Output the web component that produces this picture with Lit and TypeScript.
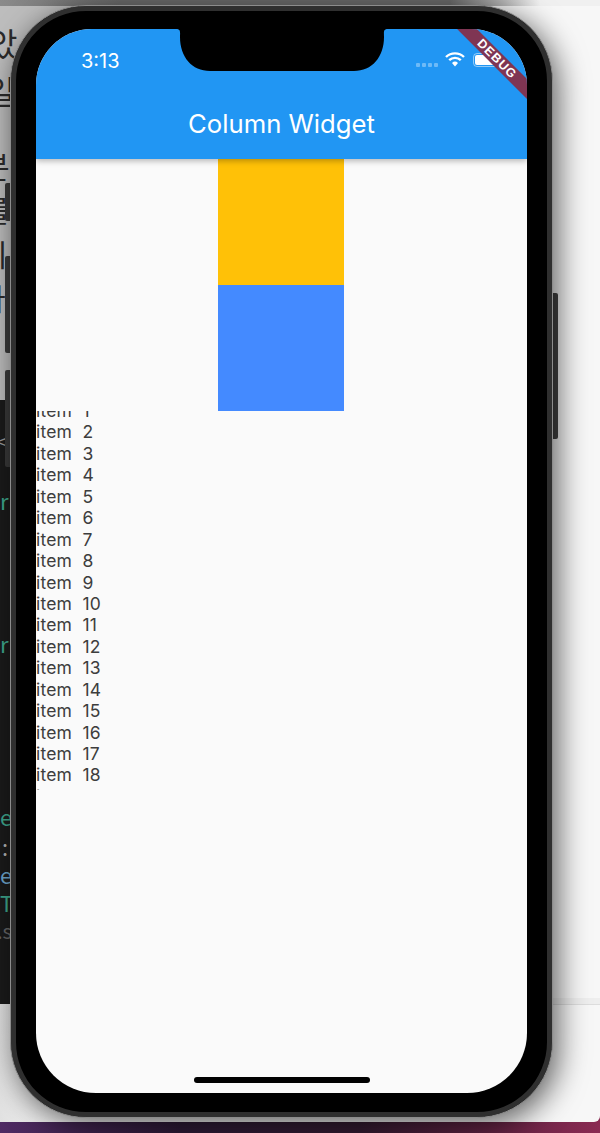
import { LitElement, html, css, svg } from "lit";
import { customElement } from "lit/decorators.js";

const ITEMS = Array.from({ length: 19 }, (_, i) => i + 1);

const STRIP = [
  { t: "았", y: 26, s: 32, c: "#2b2b2b", x: -12 },
  { t: "일", y: 74, s: 32, c: "#2b2b2b", x: -14 },
  { t: "분", y: 150, s: 30, c: "#2b2b2b", x: -18 },
  { t: "를", y: 194, s: 30, c: "#2b2b2b", x: -18 },
  { t: "지", y: 238, s: 30, c: "#2b2b2b", x: -20 },
  { t: "다", y: 282, s: 30, c: "#2b2b2b", x: -22 },
  { t: "<", y: 432, s: 18, c: "#9a9a9a", x: -4 },
  { t: "r", y: 489, s: 22, c: "#3fa98f", x: 0 },
  { t: "r", y: 632, s: 22, c: "#3fa98f", x: 0 },
  { t: "e", y: 805, s: 22, c: "#3fa98f", x: 0 },
  { t: ":", y: 835, s: 22, c: "#b5b5b5", x: 2 },
  { t: "e", y: 863, s: 22, c: "#6fa8d0", x: 0 },
  { t: "T", y: 891, s: 22, c: "#3fa98f", x: 0 },
  { t: ".s", y: 921, s: 20, c: "#666", x: -3 },
];

@customElement("app-root")
export class AppRoot extends LitElement {
  static styles = css`
    :host {
      display: block;
      width: 600px;
      height: 1133px;
      position: relative;
      overflow: hidden;
      font-family: Inter, "Noto Sans", sans-serif;
      background: linear-gradient(90deg, #4f2a63 0, #2d1a36 30%, #331a30 60%, #8a2a52 100%);
    }
    .desk {
      position: absolute;
      inset: 0 0 11px 0;
      background: #f7f7f7;
      border-bottom-right-radius: 6px;
    }
    .top {
      position: absolute;
      left: 0;
      right: 0;
      top: 0;
      height: 6px;
      background: linear-gradient(90deg, #8a8a8a 0, #6c6c6c 20%, #6c6c6c 75%, #f0f0f0 90%);
    }
    .left-light { position: absolute; left: 0; top: 6px; width: 100px; height: 394px; background: #bdbdbd; }
    .left-dark { position: absolute; left: 0; top: 400px; width: 40px; height: 604px; background: #1b1b1b; }
    .left-bottom {
      position: absolute;
      left: 0;
      top: 1004px;
      width: 60px;
      height: 118px;
      background: linear-gradient(90deg, #e2e2e2, #f7f7f7);
    }
    .rule { position: absolute; left: 540px; right: 0; top: 998px; height: 6px; background: #eeeeee; border-bottom: 1px solid #dddddd; }
    .glyph {
      position: absolute;
      font-family: "Noto Sans CJK KR", "Liberation Mono", monospace;
      line-height: 1;
    }
    .side { position: absolute; background: #3a3a3a; }
    .side.r { left: 553px; top: 293px; width: 5px; height: 146px; border-radius: 0 2px 2px 0; background: #444; }
    .side.l0 { left: 5px; top: 183px; width: 5px; height: 38px; border-radius: 2px 0 0 2px; }
    .side.l1 { left: 5px; top: 256px; width: 5px; height: 97px; border-radius: 2px 0 0 2px; }
    .side.l2 { left: 5px; top: 370px; width: 5px; height: 97px; border-radius: 2px 0 0 2px; }
    .phone {
      position: absolute;
      left: 10px;
      top: 5px;
      width: 543px;
      height: 1113px;
      box-sizing: border-box;
      padding: 24px 26px 25px 26px;
      border-radius: 76px;
      background: #000;
      border: 1px solid #8c8c8c;
      box-shadow:
        inset 0 0 0 5px #2f2f2f,
        5px 7px 30px rgba(0, 0, 0, 0.62);
    }
    .screen {
      position: relative;
      width: 491px;
      height: 1064px;
      margin: -1px 0 0 -1px;
      overflow: hidden;
      border-radius: 56px 56px 60px 60px;
      background: #fafafa;
      display: flex;
      flex-direction: column;
    }
    .bar {
      flex: none;
      height: 130px;
      background: #2196f3;
      box-shadow: 0 2px 6px rgba(0, 0, 0, 0.28);
      position: relative;
      z-index: 1;
      color: #fff;
      display: flex;
      flex-direction: column;
    }
    .status {
      height: 62px;
      box-sizing: border-box;
      padding: 21px 0 0 45px;
      font-size: 20px;
      line-height: 22px;
    }
    .title {
      text-align: center;
      font-size: 25.7px;
      line-height: 30px;
      margin-top: 18px;
    }
    .notch {
      position: absolute;
      left: 140px;
      top: 0;
      z-index: 2;
    }
    .signal { position: absolute; left: 380px; top: 34px; display: flex; gap: 2px; }
    .signal i { width: 4px; height: 4px; border-radius: 1px; background: rgba(255, 255, 255, 0.35); }
    .wifi { position: absolute; left: 409px; top: 22px; }
    .battery {
      position: absolute;
      left: 437px;
      top: 24px;
      width: 25px;
      height: 14px;
      box-sizing: border-box;
      border: 1px solid rgba(255, 255, 255, 0.5);
      border-radius: 4px;
      padding: 1px;
    }
    .battery b { display: block; height: 100%; background: #fff; border-radius: 2px; }
    .ribbon {
      position: absolute;
      z-index: 3;
      left: 406px;
      top: 23px;
      width: 110px;
      height: 14px;
      line-height: 14px;
      text-align: center;
      transform: rotate(45deg);
      background: #7f3553;
      color: #fff;
      font-family: "Liberation Sans", sans-serif;
      font-size: 12.5px;
      font-weight: 700;
      letter-spacing: 1px;
    }
    .boxes { flex: none; display: flex; flex-direction: column; align-items: center; padding-right: 1px; }
    .box { width: 126px; height: 126px; }
    .amber { background: #ffc107; }
    .blue { background: #448aff; }
    .list {
      flex: none;
      height: 379px;
      overflow: hidden;
      color: #3d3d3d;
      font-size: 17.5px;
      letter-spacing: 0.2px;
    }
    .rows { margin-top: -11px; }
    .row { height: 21.44px; line-height: 21.44px; white-space: pre; }
    .home {
      position: absolute;
      left: 158px;
      bottom: 10px;
      width: 176px;
      height: 6px;
      border-radius: 3px;
      background: #000;
    }
  `;

  render() {
    return html`
      <div class="desk"></div>
      <div class="top"></div>
      <div class="left-light"></div>
      <div class="left-dark"></div>
      <div class="left-bottom"></div>
      <div class="rule"></div>
      ${STRIP.map(
        (g) => html`<span
          class="glyph"
          style="left:${g.x}px;top:${g.y}px;font-size:${g.s}px;color:${g.c}"
          >${g.t}</span
        >`
      )}
      <div class="side r"></div>
      <div class="side l0"></div>
      <div class="side l1"></div>
      <div class="side l2"></div>
      <div class="phone">
        <div class="screen">
          <div class="bar">
            <div class="status">3:13</div>
            <div class="title">Column Widget</div>
            <div class="signal"><i></i><i></i><i></i><i></i></div>
            <svg class="wifi" width="20" height="16" viewBox="0 0 20 16">
              ${svg`<path d="M1 6 A13 13 0 0 1 19 6" fill="none" stroke="#fff" stroke-width="2.4"/>
              <path d="M4.2 9.2 A8.5 8.5 0 0 1 15.8 9.2" fill="none" stroke="#fff" stroke-width="2.4"/>
              <path d="M7 12 L10 15.5 L13 12 A4.4 4.4 0 0 0 7 12 Z" fill="#fff"/>`}
            </svg>
            <div class="battery"><b></b></div>
          </div>
          <svg class="notch" width="212" height="42" viewBox="0 0 212 42">
            ${svg`<path d="M0 0 H212 C207 0 208 3 208 8 C208 28 196 42 178 42 H34 C16 42 4 28 4 8 C4 3 5 0 0 0 Z" fill="#000"/>`}
          </svg>
          <div class="ribbon">DEBUG</div>
          <div class="boxes">
            <div class="box amber"></div>
            <div class="box blue"></div>
          </div>
          <div class="list">
            <div class="rows">
              ${ITEMS.map((n) => html`<div class="row">item  ${n}</div>`)}
            </div>
          </div>
          <div class="home"></div>
        </div>
      </div>
    `;
  }
}
